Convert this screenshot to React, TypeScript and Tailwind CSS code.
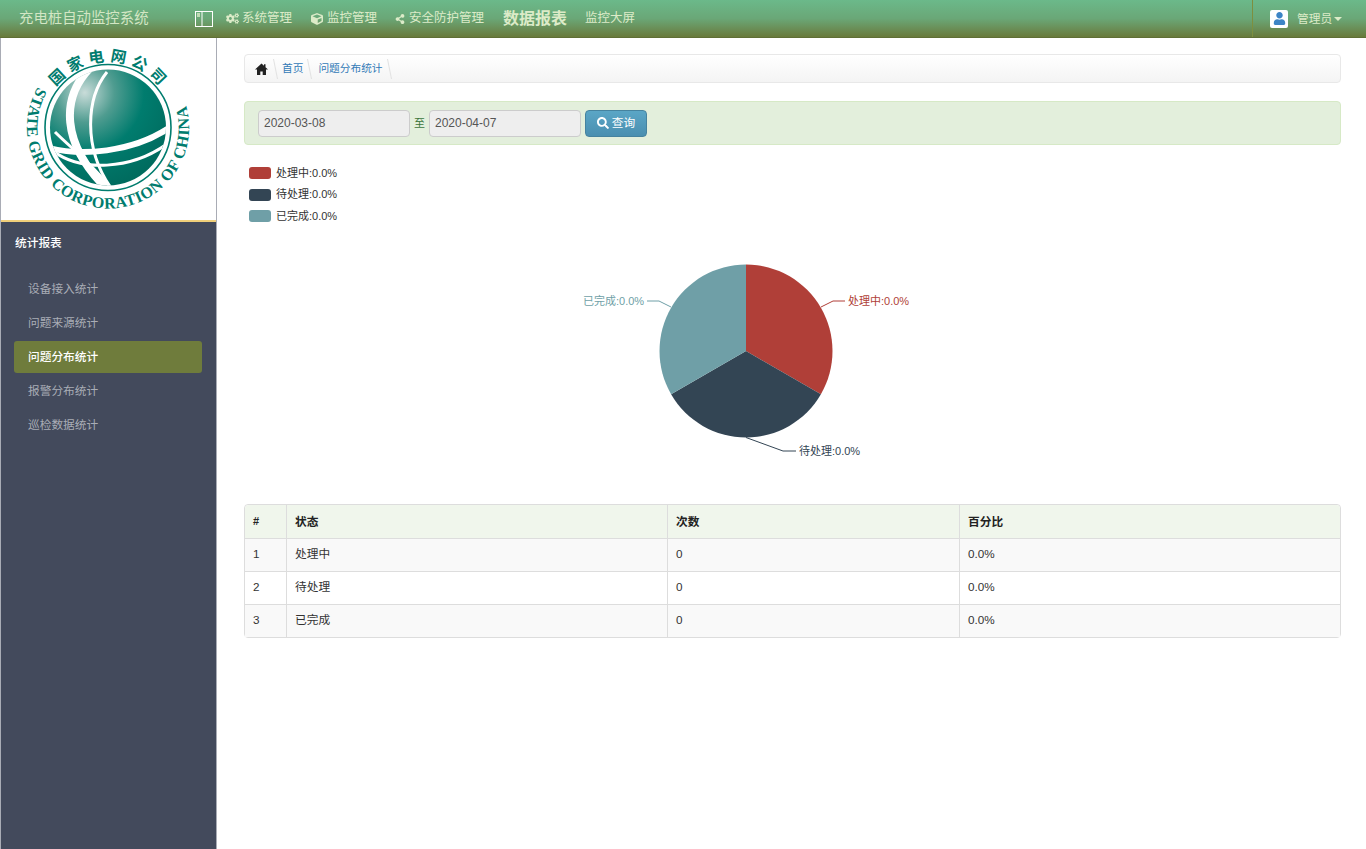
import { FaCogs, FaCube, FaSearch, FaShareAlt, FaUser } from "react-icons/fa";

const FONT = "font-['Liberation_Sans','Noto_Sans_CJK_SC',sans-serif]";

const MENU = [
  { label: "设备接入统计" },
  { label: "问题来源统计" },
  { label: "问题分布统计", active: true },
  { label: "报警分布统计" },
  { label: "巡检数据统计" },
];

const LEGEND = [
  { label: "处理中:0.0%", color: "bg-[#b03f38]" },
  { label: "待处理:0.0%", color: "bg-[#334554]" },
  { label: "已完成:0.0%", color: "bg-[#6f9fa7]" },
];

const ROWS = [
  { id: 1, name: "处理中", striped: true },
  { id: 2, name: "待处理", striped: false },
  { id: 3, name: "已完成", striped: true },
];

function Logo() {
  return (
    <svg width="215" height="182" viewBox="0 0 215 182" fill="none">
      <defs>
        <radialGradient id="globe" cx="0.3" cy="0.2" r="0.85">
          <stop offset="0" stopColor="#c9dcd9" />
          <stop offset="0.3" stopColor="#4f9c90" />
          <stop offset="0.6" stopColor="#007c6e" />
          <stop offset="1" stopColor="#006b5e" />
        </radialGradient>
        <clipPath id="ball">
          <circle cx="107" cy="89.500" r="58" />
        </clipPath>
        <path id="topArc" d="M55 48.900A66 66 0 0 1 159 48.900" />
        <path id="botArc" d="M36.900 49A81 81 0 1 0 177.100 49" />
      </defs>
      <circle cx="107" cy="89.500" r="63" stroke="#007c6e" strokeWidth="1.6" />
      <circle cx="107" cy="89.500" r="58" fill="url(#globe)" />
      <g clipPath="url(#ball)" stroke="#fff" fill="none">
        <path d="M89 30C60 60 60 105 105 150" strokeWidth="8" />
        <path d="M106 34C85 60 82 110 110 150" strokeWidth="3" />
        <path d="M48 110C80 118 130 115 168 90" strokeWidth="6" />
        <path d="M52 113C80 134 130 132 166 106" strokeWidth="3" />
        <path d="M54 94C70 110 90 125 110 150" strokeWidth="3" />
      </g>
      <text fill="#007c6e" fontSize="15.500" fontWeight="700" fontFamily="'Noto Sans CJK SC',sans-serif" letterSpacing="5">
        <textPath href="#topArc">国家电网公司</textPath>
      </text>
      <text fill="#007c6e" fontSize="16" fontWeight="700" fontFamily="'Liberation Serif',serif" letterSpacing="0.500">
        <textPath href="#botArc">STATE GRID CORPORATION OF CHINA</textPath>
      </text>
    </svg>
  );
}

function PanelIcon() {
  return (
    <svg width="18" height="16" viewBox="0 0 18 16" fill="none" stroke="#fff" strokeWidth="1" className="shrink-0">
      <rect x="0.500" y="0.500" width="17" height="15" />
      <path d="M7 0.500V15.500" />
      <path d="M2 3H5M2 5H5" stroke="#dcebc8" strokeWidth="1.500" />
    </svg>
  );
}

function HomeIcon() {
  return (
    <svg width="13" height="12" viewBox="0 0 13 12" fill="#222" className="shrink-0">
      <path d="M6.500 0.500L0 6.500H2V12H5.300V8.500H7.700V12H11V6.500H13L10.500 4.200V1.200H9V2.800Z" />
    </svg>
  );
}

function Divider() {
  return (
    <svg width="5" height="20" viewBox="0 0 5 20" className="shrink-0">
      <path d="M0.500 0L4.500 20" stroke="#e2e2e2" fill="none" />
    </svg>
  );
}

function Pie() {
  return (
    <svg
      width="1096"
      height="260"
      viewBox="0 0 1096 260"
      className="mt-[7px]"
      fontFamily="'Liberation Sans','Noto Sans CJK SC',sans-serif"
      fontSize="11"
    >
      <g transform="translate(-244 -230)">
        <path d="M746 351V264.500A86.500 86.500 0 0 1 820.900 394.250Z" fill="#b03f38" />
        <path d="M746 351L820.900 394.250A86.500 86.500 0 0 1 671.100 394.250Z" fill="#334554" />
        <path d="M746 351L671.100 394.250A86.500 86.500 0 0 1 746 264.500Z" fill="#6f9fa7" />
        <path d="M821 307L833 301H845" stroke="#b03f38" fill="none" />
        <path d="M746 437.500L783 451H796" stroke="#334554" fill="none" />
        <path d="M671 307L659 301H647" stroke="#6f9fa7" fill="none" />
        <text x="848" y="305" fill="#b03f38">处理中:0.0%</text>
        <text x="799" y="455" fill="#334554">待处理:0.0%</text>
        <text x="583" y="305" fill="#6f9fa7">已完成:0.0%</text>
      </g>
    </svg>
  );
}

export default function App() {
  return (
    <div className={`${FONT} flex min-h-[849px] flex-col bg-white text-[11.7px] text-[#333]`}>
      {/* Top bar */}
      <header className="flex h-[38px] shrink-0 items-center border-b border-[#5f6f35] bg-gradient-to-b from-[#6bb98a] via-[#6aa777] to-[#687a3b] text-[#dcebc8]">
        <div className="w-[195px] pl-[19px] text-[14.4px] text-[#d3e6c4]">充电桩自动监控系统</div>
        <PanelIcon />
        <nav className="ml-[13px] flex items-center text-[12.5px]">
          <a className="flex items-center gap-[3px]">
            <FaCogs size={13} />
            系统管理
          </a>
          <a className="ml-[19px] flex items-center gap-[4px]">
            <FaCube size={12} />
            监控管理
          </a>
          <a className="ml-[18px] flex items-center gap-[4px]">
            <FaShareAlt size={10} />
            安全防护管理
          </a>
          <a className="ml-[19px] text-base font-bold">数据报表</a>
          <a className="ml-[18px]">监控大屏</a>
        </nav>
        <div className="ml-auto flex h-full w-[114px] items-center border-l border-[#7d8f3f] pl-[17px]">
          <span className="flex size-[18px] items-center justify-center rounded-[2px] bg-white">
            <FaUser size={13} color="#3d85c6" />
          </span>
          <span className="ml-[9px]">管理员</span>
          <span className="ml-[2px] mt-[1px] border-x-[4px] border-t-[4px] border-x-transparent border-t-[#dcebc8]" />
        </div>
      </header>

      <div className="flex flex-1">
        {/* Sidebar */}
        <aside className="flex w-[217px] shrink-0 flex-col border-x border-[#a9acb5] bg-[#434a5c]">
          <div className="h-[184px] border-b-2 border-[#f0cf7a] bg-white">
            <Logo />
          </div>
          <div className="px-[14px] pt-[12px] font-medium text-white">统计报表</div>
          <ul className="mt-[21px] flex flex-col gap-[2px] pl-[13px] pr-[14px]">
            {MENU.map((item) => (
              <li
                key={item.label}
                className={`flex h-8 items-center rounded-[3px] pl-[14px] ${
                  item.active ? "bg-[#6f7c3c] font-medium text-white" : "text-[#a9adb6]"
                }`}
              >
                {item.label}
              </li>
            ))}
          </ul>
        </aside>

        {/* Main */}
        <main className="flex-1 pl-[27px] pt-4">
          <div className="flex h-[29px] w-[1097px] items-center rounded-[4px] border border-[#e8e8e8] bg-gradient-to-b from-white to-[#f4f4f4] pl-[10px] text-[10.7px] text-[#337ab7]">
            <HomeIcon />
            <span className="ml-[5px] mr-[4px]">
              <Divider />
            </span>
            <a>首页</a>
            <span className="mx-[4px]">
              <Divider />
            </span>
            <a className="ml-[2px]">问题分布统计</a>
            <span className="ml-[4px]">
              <Divider />
            </span>
          </div>

          <div className="mt-[18px] flex h-[44px] w-[1097px] items-center rounded-[4px] border border-[#d6e9c6] bg-[#e3efdc] pl-[13px] text-[#3c763d]">
            <input
              readOnly
              value="2020-03-08"
              className="h-[27px] w-[152px] rounded-[4px] border border-[#ccc] bg-[#eee] px-[5px] text-xs text-[#555]"
            />
            <span className="mx-[4px] text-[11px]">至</span>
            <input
              readOnly
              value="2020-04-07"
              className="h-[27px] w-[152px] rounded-[4px] border border-[#ccc] bg-[#eee] px-[5px] text-xs text-[#555]"
            />
            <button className="ml-[4px] flex h-[27px] w-[62px] items-center justify-center gap-[3px] rounded-[4px] border border-[#46839f] bg-gradient-to-b from-[#5ba6c6] to-[#4a8fb0] text-white">
              <FaSearch size={12} />
              查询
            </button>
          </div>

          <ul className="mt-[21px] flex flex-col gap-[7.5px] pl-[5px] text-[11px]">
            {LEGEND.map((item) => (
              <li key={item.label} className="flex h-[14px] items-center gap-[5px]">
                <span className={`h-3 w-[22px] rounded-[3px] ${item.color}`} />
                {item.label}
              </li>
            ))}
          </ul>

          <Pie />

          <table className="mt-[14px] w-[1097px] border-separate border-spacing-0 rounded-[4px] border border-[#ddd]">
            <thead>
              <tr className="h-[33px] bg-[#f0f6ec] text-[#222]">
                <th className="w-[41px] rounded-tl-[4px] pl-2 text-left text-[11px] font-bold">#</th>
                <th className="w-[381px] border-l border-[#ddd] pl-2 text-left font-bold">状态</th>
                <th className="w-[292px] border-l border-[#ddd] pl-2 text-left font-bold">次数</th>
                <th className="rounded-tr-[4px] border-l border-[#ddd] pl-2 text-left font-bold">百分比</th>
              </tr>
            </thead>
            <tbody>
              {ROWS.map((row) => (
                <tr key={row.id} className={`h-[33px] ${row.striped ? "bg-[#f9f9f9]" : "bg-white"}`}>
                  <td className="border-t border-[#ddd] pb-[2px] pl-2">{row.id}</td>
                  <td className="border-l border-t border-[#ddd] pb-[2px] pl-2">{row.name}</td>
                  <td className="border-l border-t border-[#ddd] pb-[2px] pl-2">0</td>
                  <td className="border-l border-t border-[#ddd] pb-[2px] pl-2">0.0%</td>
                </tr>
              ))}
            </tbody>
          </table>
        </main>
      </div>
    </div>
  );
}
